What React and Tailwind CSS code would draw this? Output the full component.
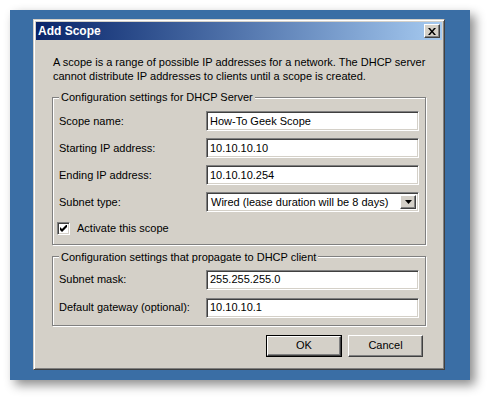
import React from 'react';

const sunken = 'border border-t-[#808080] border-l-[#808080] border-r-white border-b-white shadow-[inset_1px_1px_0_#404040,inset_-1px_-1px_0_#d4d0c8]';
const raised = 'border border-t-white border-l-white border-r-[#404040] border-b-[#404040] shadow-[inset_-1px_-1px_0_#808080]';

function TextRow({ label, value }) {
  return (
    <div className="flex items-center h-[20px]">
      <div className="w-[147px]">{label}</div>
      <div className={`flex-1 h-[20px] bg-white flex items-center pl-[3px] ${sunken}`}>{value}</div>
    </div>
  );
}

function GroupBox({ title, children, className = '' }) {
  return (
    <fieldset className={`border border-[#808080] shadow-[inset_1px_1px_0_white,1px_1px_0_white] px-[6px] ${className}`}>
      <legend className="px-[2px] bg-[#d4d0c8] leading-[14px]">{title}</legend>
      {children}
    </fieldset>
  );
}

export default function App() {
  return (
    <div
      className="w-[488px] h-[399px] bg-white pt-[10px] pl-[10px] text-[11px] text-black"
      style={{ fontFamily: '"Liberation Sans", Arial, sans-serif' }}
    >
      <div className="w-[460px] h-[370px] bg-[#3a6ea5] pt-[9px] pl-[23px] shadow-[5px_5px_10px_rgba(0,0,0,0.45)]">
        <div className="w-[412px] h-[351px] bg-[#d4d0c8] border border-t-[#d4d0c8] border-l-[#d4d0c8] border-r-[#404040] border-b-[#404040] shadow-[inset_1px_1px_0_white,inset_-1px_-1px_0_#808080] p-[2px] flex flex-col">
          <div className="h-[18px] bg-gradient-to-r from-[#0a246a] to-[#a6caf0] flex items-center justify-between pl-[2px] pr-[2px]">
            <span className="text-white font-bold text-[12px]">Add Scope</span>
            <div className={`w-[16px] h-[14px] bg-[#d4d0c8] flex items-center justify-center ${raised}`}>
              <svg width="8" height="7" viewBox="0 0 8 7">
                <path d="M0 0h2l2 2.5L6 0h2L5 3.5 8 7H6L4 4.5 2 7H0l3-3.5z" fill="black" />
              </svg>
            </div>
          </div>

          <div className="px-[16px] pt-[15px] flex flex-col">
            <p className="leading-[14px] pl-[1px]">
              A scope is a range of possible IP addresses for a network. The DHCP server
              <br />
              cannot distribute IP addresses to clients until a scope is created.
            </p>

            <GroupBox title="Configuration settings for DHCP Server" className="mt-[7px] pt-[7px] pb-[7px]">
              <div className="flex flex-col gap-[7px]">
                <TextRow label="Scope name:" value="How-To Geek Scope" />
                <TextRow label="Starting IP address:" value="10.10.10.10" />
                <TextRow label="Ending IP address:" value="10.10.10.254" />
                <div className="flex items-center h-[20px]">
                  <div className="w-[147px]">Subnet type:</div>
                  <div className={`flex-1 h-[20px] bg-white flex items-center ${sunken} p-[2px]`}>
                    <span className="flex-1 pl-[2px]">Wired (lease duration will be 8 days)</span>
                    <div className={`w-[16px] h-full bg-[#d4d0c8] flex items-center justify-center ${raised}`}>
                      <svg width="7" height="4" viewBox="0 0 7 4">
                        <path d="M0 0h7L3.5 4z" fill="black" />
                      </svg>
                    </div>
                  </div>
                </div>
                <div className="flex items-center gap-[7px] -ml-[2px] mt-[1px]">
                  <div className={`w-[13px] h-[13px] bg-white flex items-center justify-center ${sunken}`}>
                    <svg width="7" height="7" viewBox="0 0 7 7">
                      <path d="M0 2v3l2 2 5-5V-1L2 4z" fill="black" />
                    </svg>
                  </div>
                  <span>Activate this scope</span>
                </div>
              </div>
            </GroupBox>

            <GroupBox title="Configuration settings that propagate to DHCP client" className="mt-[5px] pt-[6px] pb-[7px]">
              <div className="flex flex-col gap-[8px]">
                <TextRow label="Subnet mask:" value="255.255.255.0" />
                <TextRow label="Default gateway (optional):" value="10.10.10.1" />
              </div>
            </GroupBox>

            <div className="flex justify-end gap-[6px] mt-[9px] pr-[3px]">
              <div className="border border-black">
                <div className={`w-[74px] h-[20px] flex items-center justify-center ${raised}`}>OK</div>
              </div>
              <div className={`w-[75px] h-[22px] flex items-center justify-center ${raised}`}>Cancel</div>
            </div>
          </div>
        </div>
      </div>
    </div>
  );
}
